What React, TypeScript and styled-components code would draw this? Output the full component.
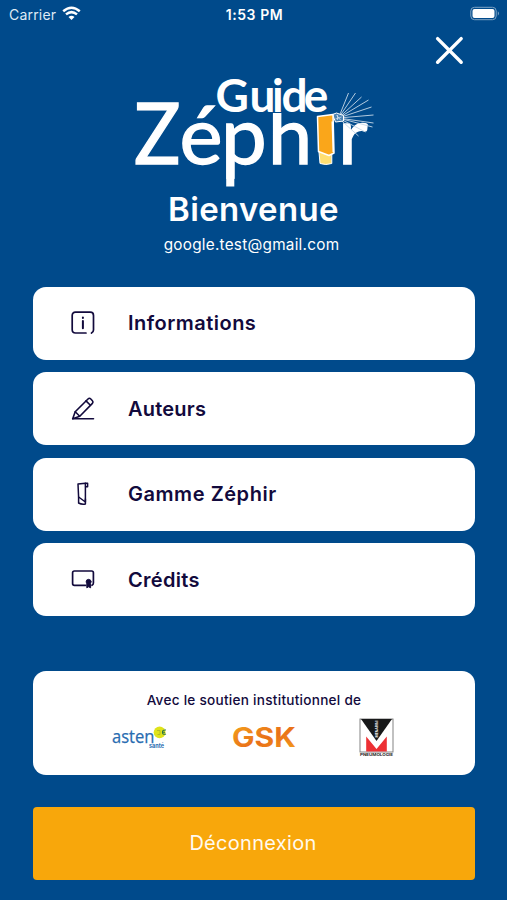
import React from "react";
import styled, { createGlobalStyle } from "styled-components";

const navy = "#120a3c";
const blue = "#004a8b";

const GlobalStyle = createGlobalStyle`
  *, *::before, *::after { box-sizing: border-box; }
  body { margin: 0; background: ${blue}; font-family: Inter, "Open Sans", sans-serif; }
  svg { flex: none; overflow: visible; }
`;

const Screen = styled.main`
  width: 507px;
  height: 900px;
  overflow: hidden;
  display: flex;
  flex-direction: column;
  background: ${blue};
  color: #fff;
`;

const StatusBar = styled.header`
  display: grid;
  grid-template-columns: 1fr auto 1fr;
  align-items: center;
  height: 28px;
  padding: 0 7px 0 9px;
  font-size: 14px;
`;

const Carrier = styled.div`
  display: flex;
  align-items: center;
  gap: 6px;
  color: #dfeaf5;
  letter-spacing: 0.2px;
`;

const Clock = styled.time`
  font-weight: 600;
  letter-spacing: 0.55px;
`;

const Battery = styled.div`
  display: flex;
  justify-content: flex-end;
`;

const TopBar = styled.div`
  display: flex;
  justify-content: flex-end;
  height: 44px;
  padding: 8px 43px 0 0;
`;

const CloseButton = styled.button`
  width: 29px;
  height: 29px;
  padding: 0;
  border: 0;
  background: none;
  color: #fff;
`;

const Brand = styled.div`
  display: flex;
  justify-content: center;
  height: 118px;
`;

const Heading = styled.h1`
  margin: 0;
  height: 38px;
  line-height: 39px;
  text-align: center;
  font-size: 33px;
  font-weight: 600;
  letter-spacing: 0.35px;
`;

const Email = styled.p`
  margin: 0;
  height: 32px;
  line-height: 33px;
  padding-right: 4px;
  text-align: center;
  font-size: 15.3px;
  letter-spacing: 0.26px;
`;

const Menu = styled.nav`
  display: grid;
  gap: 12.5px;
  margin: 26.5px 32px 0 33px;
`;

const MenuItem = styled.button`
  display: flex;
  align-items: center;
  gap: 32px;
  height: 73px;
  padding: 0 0 0 37px;
  border: 0;
  border-radius: 13px;
  background: #fff;
  color: ${navy};
  font-family: inherit;
`;

const MenuLabel = styled.span<{ $spacing: number }>`
  font-size: 20px;
  font-weight: 600;
  letter-spacing: ${(p) => p.$spacing}px;
`;

const Sponsors = styled.section`
  height: 103.5px;
  margin: 55px 32px 0 33px;
  padding-top: 19px;
  border-radius: 13px;
  background: #fff;
  color: ${navy};
`;

const SponsorTitle = styled.p`
  margin: 0;
  line-height: 20px;
  text-align: center;
  font-size: 13.6px;
  font-weight: 500;
  letter-spacing: 0.26px;
`;

const SponsorRow = styled.div`
  display: flex;
  justify-content: space-between;
  align-items: center;
  height: 40px;
  margin-top: 7px;
  padding: 0 81px 0 79px;
`;

const Logout = styled.button`
  height: 73.5px;
  margin: 32px 32px 0 33px;
  padding: 0 2px 0 0;
  border: 0;
  border-radius: 4px;
  background: #f8a70b;
  color: #fffaf0;
  font-family: inherit;
  font-size: 20px;
  font-weight: 400;
  letter-spacing: 0.3px;
`;

const WifiIcon = () => (
  <svg width="19" height="15" viewBox="0 0 19 15" fill="none" stroke="#fff" strokeWidth="2.5">
    <path d="M1.2 4.2Q9.5-2.7 17.8 4.2" />
    <path d="M4 7.4Q9.5 2.8 15 7.4" />
    <path d="M6.5 9.9Q9.5 7.4 12.5 9.9L9.5 13Z" fill="#fff" stroke="none" />
  </svg>
);

const BatteryIcon = () => (
  <svg width="30" height="14" viewBox="0 0 30 14">
    <rect x=".8" y=".3" width="25.4" height="12.4" rx="3.7" fill="none" stroke="#7fa4c5" strokeWidth="1" />
    <rect x="2.5" y="2" width="22" height="9" rx="2" fill="#fff" />
    <path d="M27.8 4.3q2.3 2.2 0 4.4z" fill="#7fa4c5" />
  </svg>
);

const CloseIcon = () => (
  <svg width="29" height="29" viewBox="0 0 29 29" stroke="currentColor" strokeWidth="3.4" strokeLinecap="round">
    <path d="M2.6 2.6 26.2 26.2M26.2 2.6 2.6 26.2" />
  </svg>
);

const rays = [
  [348, 93], [355, 93], [361, 97], [368, 100], [371, 107],
  [373, 115], [373, 123], [372, 127], [365, 132], [358, 136],
];

const ZephirLogo = () => (
  <svg width="250" height="118" viewBox="128.5 72 250 118" role="img" aria-label="Guide Zéphir">
    <defs>
      <clipPath id="ascender"><path d="M260 113H318V170H260Z" /></clipPath>
    </defs>
    <g fill="#fff" stroke="#fff" fontFamily="Lato, sans-serif">
      <text y="112" x="215 249 271.5 281 303.2" fontSize="46" fontWeight="700" strokeWidth="0">Guide</text>
      <g fontWeight="400" strokeWidth="1.3">
        <text transform="translate(133.5 163.5) scale(.9 1)" fontSize="86">Z</text>
        <text transform="translate(179 163.5) scale(1.02 1)" fontSize="80">é</text>
        <text transform="translate(220.6 163.5) scale(1.02 1)" fontSize="80">p</text>
        <g clipPath="url(#ascender)">
          <text transform="translate(267.5 163.5) scale(.99 1)" fontSize="80">h</text>
        </g>
        <text transform="translate(337.5 163.5) scale(1.02 1)" fontSize="80">r</text>
      </g>
    </g>
    <path d="M225.7 178H233.8V186.5H225.7Z" fill="#fff" />
    <g stroke="#c6d8e8" strokeWidth=".9">
      {rays.map(([x, y]) => <path key={`${x}-${y}`} d={`M338 118 ${x} ${y}`} />)}
    </g>
    <path d="M332 114.5 336 113 343 115.5V121L335 122Z" fill="#4c83b3" stroke="#fff" strokeWidth="1" />
    <path d="m336 115 4 5m-5-1 6-2m-4-2v5" stroke="#d9e7f2" strokeWidth=".7" />
    <path d="M318.5 152h12.8v11.5q-6 2-11.8 0z" fill="#ffdf72" stroke="#fff" strokeWidth="1" />
    <path d="M317 116.5 332.5 114.5 333.5 153 328.5 155.5 318 151.5Z" fill="#faa61a" stroke="#fff" strokeWidth="1.5" strokeLinejoin="round" />
    <path d="M331 121.5h2.5V152H332z" fill="#fff" />
  </svg>
);

const iconProps = {
  width: 26, height: 26, viewBox: "0 0 26 26", fill: "none",
  stroke: navy, strokeWidth: 1.7, strokeLinecap: "round" as const, strokeLinejoin: "round" as const,
};

const InfoIcon = () => (
  <svg {...iconProps}>
    <path d="M16 23H5.5Q2.2 23 2.2 19.7V5.5Q2.2 2.2 5.5 2.2H20.2Q23.5 2.2 23.5 5.5V20Q23.5 22 21.5 23" />
    <path d="M12.9 11v7.2M12.9 7.5v.4" strokeWidth="2" />
  </svg>
);

const PencilIcon = () => (
  <svg {...iconProps} strokeWidth="1.6">
    <path d="m2.7 22.8 2.5-7L18 3q1.4-1.4 2.8 0l1.6 1.7q1.2 1.3 0 2.7L9.8 20.2Z" />
    <path d="m5.2 15.8 4.3 4.2M16 4.9l4.4 4.4M2.7 22.8H23.5" />
  </svg>
);

const DeviceIcon = () => (
  <svg {...iconProps} strokeWidth="1.5">
    <path d="M8 3 15.4 2.2V21L8.6 16Z" />
    <path d="M8.6 16v6q3 1.7 6.8 1V18M15.4 2.2h2.2v3.6h-2" />
  </svg>
);

const CertificateIcon = () => (
  <svg {...iconProps}>
    <path d="M15.5 18.3H4.4Q2.6 18.3 2.6 16.5V5.8Q2.6 4 4.4 4H21.7Q23.4 4 23.4 5.8V16Q23.4 17.5 22 18.3" />
    <circle cx="18.6" cy="14.8" r="2.5" fill={navy} strokeWidth=".8" />
    <path d="M16.8 17v3.8l1.8-1 2 1V17" fill={navy} strokeWidth="1" />
  </svg>
);

const AstenLogo = () => (
  <svg width="56" height="24" viewBox="0 0 56 24" role="img" aria-label="Asten Santé">
    <circle cx="47.6" cy="7.3" r="5.9" fill="#dfe31a" />
    <path d="M45 5.5h3v4h-2.5" fill="none" stroke="#a9b528" strokeWidth=".8" />
    <path d="M54 5q-4-.5-3.5 2.8Q51 10 54 9M51 7.3h2" fill="none" stroke="#28754b" strokeWidth="1.1" />
    <text x="0" y="18" textLength="42.5" lengthAdjust="spacingAndGlyphs" fontFamily="Open Sans, sans-serif" fontSize="18.5" fill="#286cb1" stroke="#286cb1" strokeWidth=".25">asten</text>
    <text x="37" y="22.5" textLength="15" lengthAdjust="spacingAndGlyphs" fontFamily="Inter, sans-serif" fontSize="5.5" fontWeight="700" fill="#286cb1">santé</text>
  </svg>
);

const GskLogo = () => (
  <svg width="64" height="24" viewBox="0 0 64 24" role="img" aria-label="GSK">
    <defs>
      <linearGradient id="gsk" x1="0" y1="0" x2="1" y2="1">
        <stop stopColor="#f5a81c" /><stop offset=".55" stopColor="#e96f18" /><stop offset="1" stopColor="#f5a11c" />
      </linearGradient>
    </defs>
    <text x="0" y="22" textLength="64" lengthAdjust="spacingAndGlyphs" fontFamily="Inter, sans-serif" fontSize="26.5" fontWeight="700" fill="url(#gsk)">GSK</text>
  </svg>
);

const MenariniLogo = () => (
  <svg width="35" height="40" viewBox="0 0 35 40" role="img" aria-label="Menarini Pneumologie">
    <rect x="1" y="2" width="33" height="33" fill="#fff" stroke="#777" strokeWidth=".9" />
    <path d="M2 2H33L17.5 24Z" fill="#171819" />
    <path d="M7.2 34.6V19.5L17.5 32 27.8 19.5V34.6Z" fill="#ed3034" />
    <text transform="translate(18.7 20.5) rotate(-90)" textLength="17" lengthAdjust="spacingAndGlyphs" fontFamily="Inter, sans-serif" fontSize="4" fontWeight="600" fill="#fff">MENARINI</text>
    <text x="1" y="38.7" textLength="33" lengthAdjust="spacingAndGlyphs" fontFamily="Inter, sans-serif" fontSize="3.9" fontWeight="700" fill="#222">PNEUMOLOGIE</text>
  </svg>
);

const entries = [
  { label: "Informations", icon: <InfoIcon />, spacing: 0.48 },
  { label: "Auteurs", icon: <PencilIcon />, spacing: 0.22 },
  { label: "Gamme Zéphir", icon: <DeviceIcon />, spacing: 0.55 },
  { label: "Crédits", icon: <CertificateIcon />, spacing: 0.3 },
];

export default function App() {
  return (
    <>
      <GlobalStyle />
      <Screen>
        <StatusBar>
          <Carrier>Carrier <WifiIcon /></Carrier>
          <Clock>1:53 PM</Clock>
          <Battery><BatteryIcon /></Battery>
        </StatusBar>
        <TopBar>
          <CloseButton aria-label="Fermer"><CloseIcon /></CloseButton>
        </TopBar>
        <Brand><ZephirLogo /></Brand>
        <Heading>Bienvenue</Heading>
        <Email>google.test@gmail.com</Email>
        <Menu>
          {entries.map(({ label, icon, spacing }) => (
            <MenuItem key={label}>
              {icon}
              <MenuLabel $spacing={spacing}>{label}</MenuLabel>
            </MenuItem>
          ))}
        </Menu>
        <Sponsors>
          <SponsorTitle>Avec le soutien institutionnel de</SponsorTitle>
          <SponsorRow>
            <AstenLogo />
            <GskLogo />
            <MenariniLogo />
          </SponsorRow>
        </Sponsors>
        <Logout>Déconnexion</Logout>
      </Screen>
    </>
  );
}
